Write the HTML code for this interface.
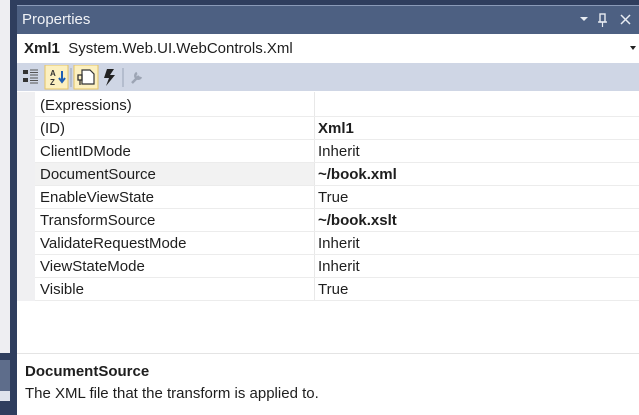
<!DOCTYPE html>
<html><head><style>
*{margin:0;padding:0;box-sizing:border-box}
body{width:639px;height:415px;overflow:hidden;background:#2f3e5e;font-family:"Liberation Sans",sans-serif;position:relative}
.a{position:absolute}
.t{font-size:15px;color:#1e1e1e;white-space:nowrap}
</style></head><body>
<div class="a" style="left:0;top:0;width:10px;height:353px;background:#eeeef2"></div>
<div class="a" style="left:0;top:360px;width:10px;height:31px;background:#5e6d8b"></div>
<div class="a" style="left:0;top:391px;width:10px;height:10px;background:#dfe3ec"></div>
<div class="a" style="left:17px;top:5px;width:622px;height:1px;background:#8a9ab8"></div>
<div class="a" style="left:17px;top:6px;width:622px;height:28px;background:#4d6082"></div>
<div class="a t" style="left:22px;top:11px;color:#f0f2f6;font-size:15px">Properties</div>
<svg class="a" style="left:578px;top:12px" width="60" height="16">
<polygon points="2,5 10,5 6,9" fill="#e8ecf2"/>
<rect x="22" y="2" width="5" height="8" fill="none" stroke="#e8ecf2" stroke-width="1.4"/>
<line x1="20" y1="10" x2="29" y2="10" stroke="#e8ecf2" stroke-width="1.4"/>
<line x1="24.5" y1="10" x2="24.5" y2="15" stroke="#e8ecf2" stroke-width="1.2"/>
<path d="M43 3 L52 12 M52 3 L43 12" stroke="#e8ecf2" stroke-width="1.5"/>
</svg>
<div class="a" style="left:17px;top:34px;width:622px;height:29px;background:#fff"></div>
<div class="a t" style="left:24px;top:40px"><b>Xml1</b>&nbsp; System.Web.UI.WebControls.Xml</div>
<svg class="a" style="left:630px;top:46px" width="8" height="5"><polygon points="0,0 6,0 3,4" fill="#222"/></svg>
<div class="a" style="left:17px;top:63px;width:622px;height:28px;background:#cfd6e5"></div>
<svg class="a" style="left:22px;top:65px" width="140" height="25">
<rect x="1" y="5" width="5" height="4" fill="#333"/><rect x="1" y="13" width="5" height="4" fill="#333"/>
<path d="M8 5h8M8 7.5h8M8 10h8M8 13h8M8 15.5h8M8 18h8" stroke="#555" stroke-width="1"/>
<rect x="23" y="0" width="23" height="24" fill="#fcf0c0" stroke="#e5c365"/>
<text x="28" y="11" font-size="8" font-family="Liberation Sans" font-weight="bold" fill="#333">A</text>
<text x="28" y="20" font-size="8" font-family="Liberation Sans" font-weight="bold" fill="#333">Z</text>
<path d="M40 6v10M37 13l3 4 3-4" stroke="#1f5fb5" stroke-width="2" fill="none"/>
<line x1="49" y1="3" x2="49" y2="22" stroke="#9aa4b8"/>
<rect x="52" y="0" width="24" height="24" fill="#fcf0c0" stroke="#e5c365"/>
<path d="M60 5h8l4 4v10h-12z" fill="#fff" stroke="#333" stroke-width="1.2"/>
<rect x="56" y="10" width="4" height="5" fill="none" stroke="#333" stroke-width="1.3"/>
<path d="M58 15v5" stroke="#333" stroke-width="1.3"/>
<path d="M85 4h7l-4 6h5l-9 11 3-8h-5z" fill="#222"/>
<line x1="101" y1="3" x2="101" y2="22" stroke="#9aa4b8"/>
<path d="M110 18l7-7M115 8a3 3 0 1 0 4 4" stroke="#9da5b4" stroke-width="2.5" fill="none"/>
</svg>
<div class="a" style="left:17px;top:91px;width:622px;height:262px;background:#fff"></div>
<div class="a" style="left:17px;top:92px;width:18px;height:209px;background:#f0f0f2"></div>
<div class="a" style="left:35px;top:162px;width:280px;height:23px;background:#f2f2f2"></div>
<div class="a" style="left:314px;top:92px;width:1px;height:209px;background:#e8e8e8"></div>
<div class="a" style="left:17px;top:353px;width:622px;height:1px;background:#e4e4e4"></div>
<div class="a" style="left:17px;top:354px;width:622px;height:61px;background:#fff"></div>
<div class="a t" style="left:25px;top:363px"><b>DocumentSource</b></div>
<div class="a t" style="left:25px;top:385px">The XML file that the transform is applied to.</div>
<div class="a t" style="left:40px;top:97px">(Expressions)</div>
<div class="a t" style="left:40px;top:120px">(ID)</div><div class="a t" style="left:318px;top:120px"><b>Xml1</b></div>
<div class="a t" style="left:40px;top:143px">ClientIDMode</div><div class="a t" style="left:318px;top:143px">Inherit</div>
<div class="a t" style="left:40px;top:166px">DocumentSource</div><div class="a t" style="left:318px;top:166px"><b>~/book.xml</b></div>
<div class="a t" style="left:40px;top:189px">EnableViewState</div><div class="a t" style="left:318px;top:189px">True</div>
<div class="a t" style="left:40px;top:212px">TransformSource</div><div class="a t" style="left:318px;top:212px"><b>~/book.xslt</b></div>
<div class="a t" style="left:40px;top:235px">ValidateRequestMode</div><div class="a t" style="left:318px;top:235px">Inherit</div>
<div class="a t" style="left:40px;top:258px">ViewStateMode</div><div class="a t" style="left:318px;top:258px">Inherit</div>
<div class="a t" style="left:40px;top:281px">Visible</div><div class="a t" style="left:318px;top:281px">True</div>
<div class="a" style="left:35px;top:116px;width:604px;height:1px;background:#ececec"></div>
<div class="a" style="left:35px;top:139px;width:604px;height:1px;background:#ececec"></div>
<div class="a" style="left:35px;top:162px;width:604px;height:1px;background:#ececec"></div>
<div class="a" style="left:35px;top:185px;width:604px;height:1px;background:#ececec"></div>
<div class="a" style="left:35px;top:208px;width:604px;height:1px;background:#ececec"></div>
<div class="a" style="left:35px;top:231px;width:604px;height:1px;background:#ececec"></div>
<div class="a" style="left:35px;top:254px;width:604px;height:1px;background:#ececec"></div>
<div class="a" style="left:35px;top:277px;width:604px;height:1px;background:#ececec"></div>
<div class="a" style="left:35px;top:300px;width:604px;height:1px;background:#ececec"></div>
</body></html>
